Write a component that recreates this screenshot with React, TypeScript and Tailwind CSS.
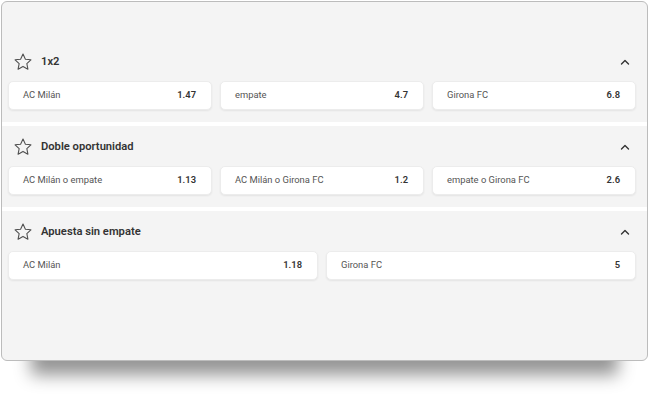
import React from "react";

type Opt = { label: string; odds: string };
type Market = { title: string; opts: Opt[] };

const markets: Market[] = [
  {
    title: "1x2",
    opts: [
      { label: "AC Milán", odds: "1.47" },
      { label: "empate", odds: "4.7" },
      { label: "Girona FC", odds: "6.8" },
    ],
  },
  {
    title: "Doble oportunidad",
    opts: [
      { label: "AC Milán o empate", odds: "1.13" },
      { label: "AC Milán o Girona FC", odds: "1.2" },
      { label: "empate o Girona FC", odds: "2.6" },
    ],
  },
  {
    title: "Apuesta sin empate",
    opts: [
      { label: "AC Milán", odds: "1.18" },
      { label: "Girona FC", odds: "5" },
    ],
  },
];

function Star() {
  return (
    <svg width="20" height="20" viewBox="0 0 24 24" fill="none" stroke="#505050" strokeWidth="1.3" strokeLinejoin="round">
      <path d="M12 2.5l2.9 6.1 6.6.8-4.9 4.6 1.3 6.6L12 17.3l-5.9 3.3 1.3-6.6-4.9-4.6 6.6-.8z" />
    </svg>
  );
}

function Chevron() {
  return (
    <svg width="10" height="6" viewBox="0 0 10 6" fill="none" stroke="#333" strokeWidth="1.4" strokeLinecap="round" strokeLinejoin="round">
      <path d="M1.5 5L5 1.5 8.5 5" />
    </svg>
  );
}

function Section({ m }: { m: Market }) {
  return (
    <div className="bg-[#f4f4f4] pt-[9px] pb-[12px] pl-[6px] pr-[11px]">
      <div className="h-[24px] flex items-center">
        <div className="w-[20px] ml-[5px] flex items-center">
          <Star />
        </div>
        <div className="ml-[8px] text-[11.2px] font-semibold text-[#333]">{m.title}</div>
        <div className="ml-auto mr-[6px] flex items-center">
          <Chevron />
        </div>
      </div>
      <div className={"mt-[7px] grid gap-[8px] " + (m.opts.length === 3 ? "grid-cols-3" : "grid-cols-2")}>
        {m.opts.map((o, i) => (
          <div
            key={i}
            className="h-[29px] bg-white rounded-[5px] shadow-[0_1px_2px_rgba(0,0,0,0.07)] border border-[#ececec] flex items-center justify-between pl-[14px] pr-[15px]"
          >
            <span className="text-[9.4px] text-[#555]">{o.label}</span>
            <span className="text-[9.4px] font-semibold text-[#333]">{o.odds}</span>
          </div>
        ))}
      </div>
    </div>
  );
}

export default function App() {
  return (
    <div className="w-[650px] h-[394px] bg-white pt-[1px] pl-[1px]" style={{ fontFamily: "Roboto, 'Liberation Sans', sans-serif" }}>
      <div className="w-[647px] h-[360px] border border-[#bcbcbc] rounded-[6px] bg-[#f4f4f4] shadow-[0_44px_16px_-30px_rgba(0,0,0,0.42)] overflow-hidden pt-[39px]">
        {markets.map((m, i) => (
          <React.Fragment key={i}>
            {i > 0 && <div className="h-[4px] bg-white" />}
            <Section m={m} />
          </React.Fragment>
        ))}
      </div>
    </div>
  );
}
